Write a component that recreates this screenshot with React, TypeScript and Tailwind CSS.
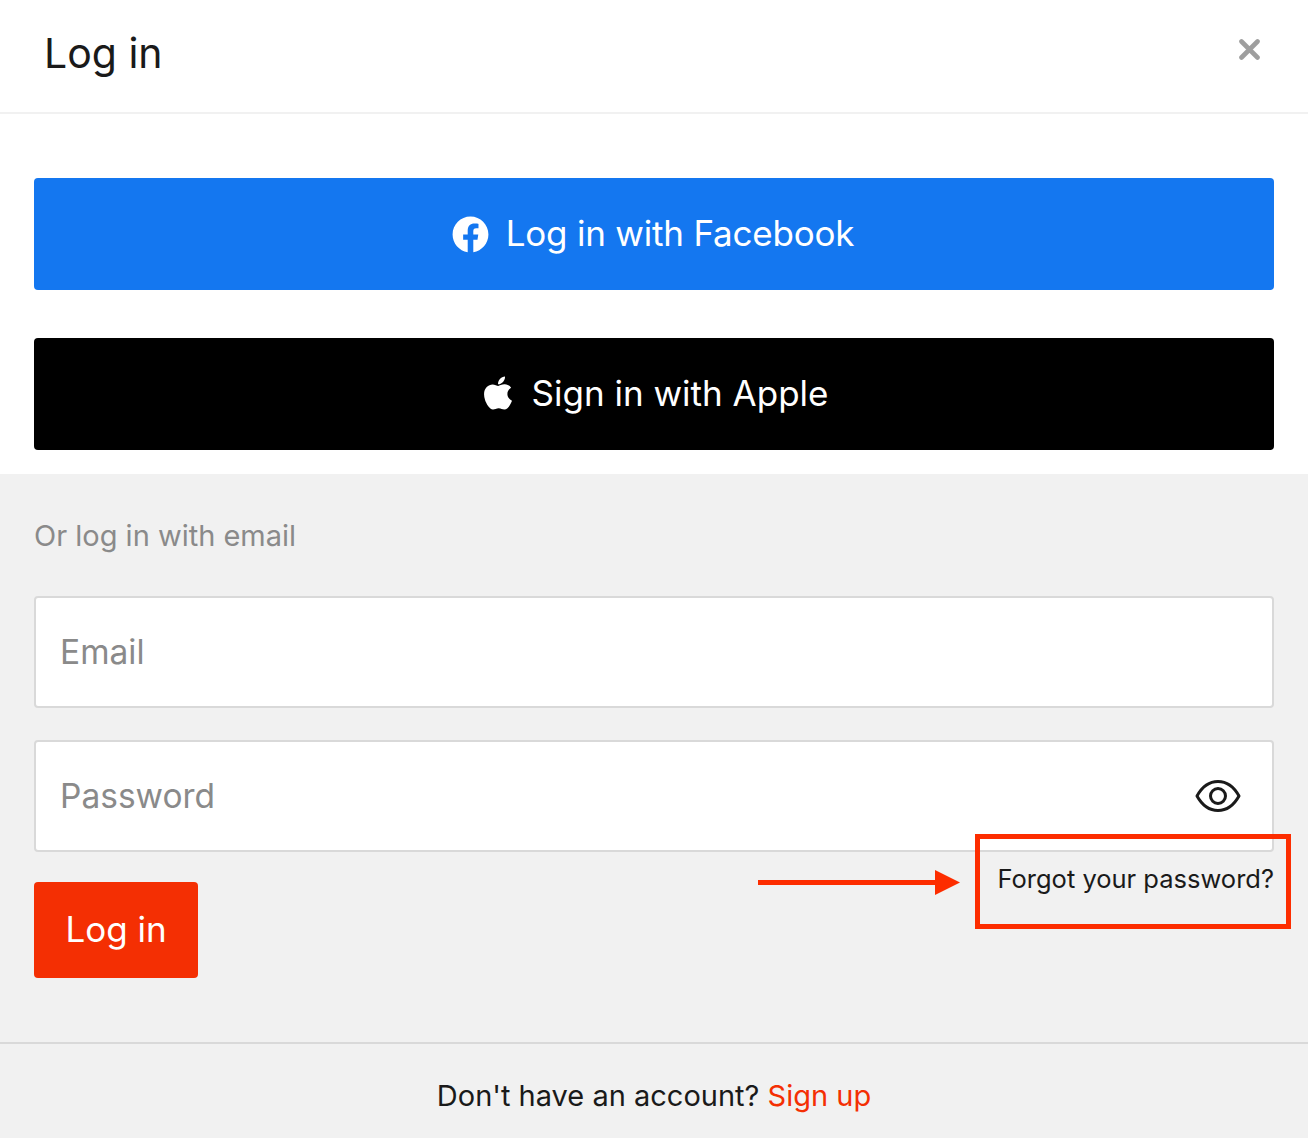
import { FaApple, FaFacebook } from 'react-icons/fa';

/**
 * Log in modal with social buttons and an annotated "forgot password" link
 */
export default function App() {
  return (
    <div className="relative w-[1308px] h-[1138px] overflow-hidden bg-white font-['Inter',sans-serif] text-[#1a1a1a] antialiased">
      <header className="flex h-[114px] items-center justify-between border-b-2 border-[#f1f1f1] pl-[44px] pr-[48px]">
        <h1 className="text-[41px] leading-[48px] pb-[7px]">Log in</h1>
        <svg className="mb-[14px] h-[21px] w-[21px]" viewBox="0 0 21 21" fill="none">
          <path d="M2.5 2.5 18.5 18.5M18.5 2.5 2.5 18.5" stroke="#9e9e9e" strokeWidth="4.6" strokeLinecap="round" />
        </svg>
      </header>

      <div className="flex flex-col gap-[48px] px-[34px] pt-[64px] pb-[24px]">
        <button className="flex h-[112px] items-center justify-center gap-[17px] rounded-[4px] bg-[#1477f0] pr-[2px] text-[35px] tracking-[-0.2px] text-white">
          <FaFacebook className="h-[37px] w-[37px]" />
          <span className="pb-[2px]">Log in with Facebook</span>
        </button>
        <button className="flex h-[112px] items-center justify-center gap-[19px] rounded-[4px] bg-black pl-[3px] text-[35px] text-white">
          <FaApple className="mb-[2px] h-[38px] w-[30px]" />
          <span className="pb-[2px]">Sign in with Apple</span>
        </button>
      </div>

      <div className="h-[664px] bg-[#f1f1f1]">
        <div className="px-[34px]">
          <p className="pt-[44px] text-[29px] leading-[36px] text-[#8a8a8a]">Or log in with email</p>
          <div className="mt-[42px] flex h-[112px] items-center rounded-[4px] border-2 border-[#d9d9d9] bg-white pl-[24px] text-[33.5px] text-[#8a8a8a]">
            Email
          </div>
          <div className="mt-[32px] flex h-[112px] items-center justify-between rounded-[4px] border-2 border-[#d9d9d9] bg-white pl-[24px] pr-[31px] text-[33.5px] text-[#8a8a8a]">
            Password
            <svg className="h-[34px] w-[46px]" viewBox="0 0 46 34" fill="none" stroke="#1a1a1a" strokeWidth="3">
              <path d="M2 17C7 8 14 2.500 23 2.500S39 8 44 17C39 26 32 31.500 23 31.500S7 26 2 17Z" strokeLinejoin="round" />
              <circle cx="23" cy="17" r="7.500" />
            </svg>
          </div>
          <div className="mt-[30px] flex items-start justify-between">
            <button className="flex h-[96px] w-[164px] items-center justify-center rounded-[4px] bg-[#f42f03] pb-[2px] text-[35px] text-white">
              Log in
            </button>
            <a className="-mt-[21px] text-[25.5px] leading-[36px]">Forgot your password?</a>
          </div>
        </div>
        <div className="mt-[64px] border-t-2 border-[#d9d9d9] pt-[32px] text-center text-[29px] leading-[40px]">
          Don't have an account? <span className="text-[#f42f03]">Sign up</span>
        </div>
      </div>

      {/* red annotation drawn over the page */}
      <div className="absolute left-[975px] top-[834px] h-[95px] w-[316px] border-[5px] border-[#fd2d00]" />
      <div className="absolute left-[758px] top-[880px] h-[5px] w-[180px] bg-[#fd2d00]" />
      <svg className="absolute left-[935px] top-[870px] h-[25px] w-[25px]" viewBox="0 0 25 25">
        <path d="M0 0 25 12.500 0 25Z" fill="#fd2d00" />
      </svg>
    </div>
  );
}
